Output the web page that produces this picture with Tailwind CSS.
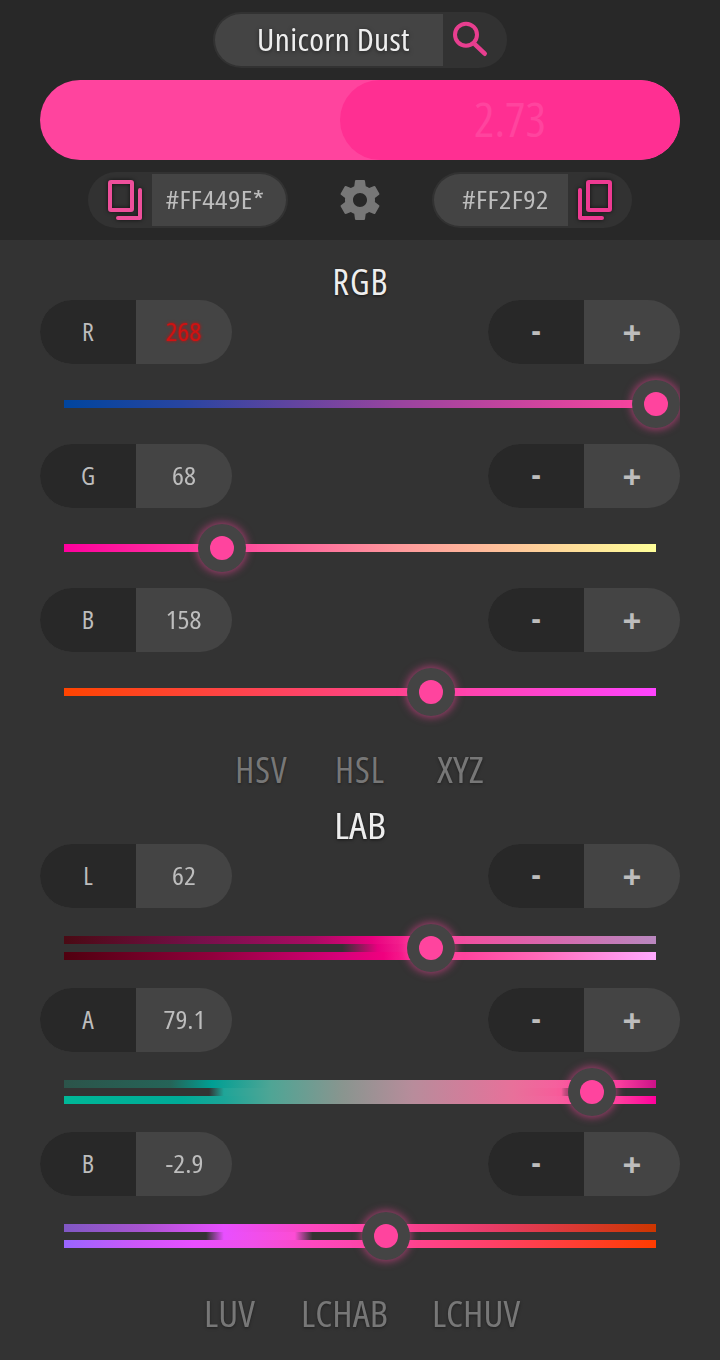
<!DOCTYPE html>
<html lang="en">
<head>
<meta charset="utf-8">
<title>Unicorn Dust</title>
<script src="https://cdn.jsdelivr.net/npm/@tailwindcss/browser@4"></script>
</head>
<body class="w-[720px] h-[1360px] overflow-hidden bg-[#333333] font-['Open_Sans','Noto_Sans',sans-serif] text-[#bdbdbd] [font-stretch:75%]">
<header class="h-[240px] bg-[#282828] flex flex-col items-center pt-3">
  <div class="h-14 w-[294px] rounded-full bg-[#323232] flex p-0.5">
    <div class="w-[228px] rounded-l-full bg-[#444444] flex items-center justify-center pl-2.5 pb-0.5 text-[30px] tracking-[0.3px] text-[#eeeeee] [text-shadow:0_1px_4px_#0008]"><span class="scale-x-[1.115]">Unicorn Dust</span></div>
    <svg class="w-12 h-12 mt-0.5 ml-1 shrink-0" viewBox="0 0 48 48" fill="none" stroke="#e83e8f" stroke-width="4"><circle cx="19" cy="18.7" r="11"/><path d="M28.2 28.7 37.7 37.7" stroke-width="4.6" stroke-linecap="round"/></svg>
  </div>
  <div class="mt-3 w-[640px] h-20 rounded-full bg-[#ff449e] flex justify-end overflow-hidden">
    <div class="w-[340px] rounded-full bg-[#ff2f92] flex items-center justify-center pb-0.5 text-[48px] text-[#ff449e]"><span>2.73</span></div>
  </div>
  <div class="mt-3 w-[544px] h-14 flex items-center justify-between">
    <div class="w-[200px] h-14 rounded-full bg-[#323232] flex p-0.5">
      <svg class="w-[62px] h-[52px] shrink-0 drop-shadow-[0_0_2px_#000a]" viewBox="90 174 62 52" fill="none" stroke="#ee4f9b" stroke-width="4" stroke-linejoin="round" stroke-linecap="round"><rect x="110" y="182" width="22" height="28" rx="1"/><path d="M140 190V218H118"/></svg>
      <div class="w-[134px] rounded-r-full bg-[#444444] flex items-center justify-center pr-[7px] pb-0.5 text-[26px] tracking-[0.4px]"><span class="scale-x-[1.12]">#FF449E*</span></div>
    </div>
    <svg class="w-12 h-12" viewBox="0 0 24 24" fill="#777777"><path d="M19.43 12.98c.04-.32.07-.64.07-.98s-.03-.66-.07-.98l2.11-1.65c.19-.15.24-.42.12-.64l-2-3.46c-.12-.22-.39-.3-.61-.22l-2.49 1c-.52-.4-1.08-.73-1.69-.98l-.38-2.65C14.46 2.18 14.25 2 14 2h-4c-.25 0-.46.18-.49.42l-.38 2.65c-.61.25-1.17.59-1.69.98l-2.49-1c-.23-.09-.49 0-.61.22l-2 3.46c-.13.22-.07.49.12.64l2.11 1.65c-.04.32-.07.65-.07.98s.03.66.07.98l-2.11 1.65c-.19.15-.24.42-.12.64l2 3.46c.12.22.39.3.61.22l2.49-1c.52.4 1.08.73 1.69.98l.38 2.65c.03.24.24.42.49.42h4c.25 0 .46-.18.49-.42l.38-2.65c.61-.25 1.17-.59 1.69-.98l2.49 1c.23.09.49 0 .61-.22l2-3.46c.12-.22.07-.49-.12-.64l-2.11-1.65zM12 15.5c-1.93 0-3.5-1.57-3.5-3.5s1.57-3.5 3.5-3.5 3.5 1.57 3.5 3.5-1.57 3.5-3.5 3.5z"/></svg>
    <div class="w-[200px] h-14 rounded-full bg-[#323232] flex p-0.5">
      <div class="w-[134px] rounded-l-full bg-[#444444] flex items-center justify-center pl-[9px] pb-0.5 text-[26px] tracking-[0.4px]"><span class="scale-x-[1.12]">#FF2F92</span></div>
      <svg class="w-[62px] h-[52px] shrink-0 drop-shadow-[0_0_2px_#000a]" viewBox="568 174 62 52" fill="none" stroke="#ee3a92" stroke-width="4" stroke-linejoin="round" stroke-linecap="round"><rect x="588" y="182" width="22" height="28" rx="1"/><path d="M580 190V218H602"/></svg>
    </div>
  </div>
</header>
<main class="px-10">
  <h2 class="h-[60px] pt-[18px] pl-px text-center text-[36px] tracking-[1px] leading-[48px] text-[#eeeeee] [text-shadow:0_1px_3px_#0009]">RGB</h2>
  <section id="rgb"></section>
  <nav class="h-16 flex justify-center gap-[44px] pt-[14px] text-center whitespace-nowrap text-[36px] leading-[48px] text-[#777777] [text-shadow:0_1px_3px_#0006]"><span class="w-[56px] tracking-[1px]">HSV</span><span class="w-[53px] tracking-[1px]">HSL</span><span class="w-[56px] pl-0.5 scale-x-[1.15]">XYZ</span></nav>
  <h2 class="h-12 pt-[6px] pl-px flex justify-center text-[36px] leading-[48px] text-[#eeeeee] [text-shadow:0_1px_3px_#0009]"><span class="scale-x-[1.12]">LAB</span></h2>
  <section id="lab"></section>
  <nav class="flex justify-center gap-[42px] pt-[14px] pl-0.5 text-center whitespace-nowrap text-[36px] leading-[48px] text-[#777777] [text-shadow:0_1px_3px_#0006]"><span class="w-[55px] scale-x-[1.07]">LUV</span><span class="w-[91px] scale-x-[1.07]">LCHAB</span><span class="w-[88px] scale-x-[1.07]">LCHUV</span></nav>
</main>
<script>
const grad = s => 'linear-gradient(90deg,' + s + ')';
const rgb = [
  ['R', '268', 656, ['#00459e,#2845a1 20%,#9a449f 57%,#ff449e']],
  ['G', '68', 222, ['#ff009e,#ff449e 27%,#ff9a9c 57%,#ffff99']],
  ['B', '158', 431, ['#ff4400,#ff449e 62%,#ff44ff']]
];
const lab = [
  ['L', '62', 431, [
    '#4a0a14,#76104a 23%,#a80b62 42%,#e8007f 52%,#ff449e 62%,#f050a0 68%,#b987bf',
    '#e8007f00 47%,#e8007f 53%,#ff449e 62%,#ff449e 65%,#ff449e00 66%',
    '#50000f,#90003c 25%,#d8007a 47%,#f0007f 54%,#ff449e 62%,#ff449e 68%,#ff6ab8 80%,#ffaaff']],
  ['A', '79.1', 592, [
    '#2c544a,#256458 18%,#009f94 25%,#4fa595 35%,#89958f 47%,#b88c9b 59%,#e8709a 76%,#ff55a0 88%,#f83c9e 94%,#cc1188',
    '#16a59800 24.5%,#1fa598 27%,#4fa595 35%,#89958f 47%,#b88c9b 59%,#e8709a 76%,#f85a9a 84%,#f85a9a00 86%',
    '#00b898,#00ab98 20%,#1ba598 27%,#4fa595 35%,#89958f 47%,#b88c9b 59%,#e8709a 76%,#ff55a0 88%,#ff3c9e 94%,#ff009c']],
  ['B', '-2.9', 386, [
    '#8058c4,#a854d0 13%,#e84fff 27%,#fd48c0 42%,#ff449e 54%,#e83c68 72%,#cc3600',
    '#e84fff00 24%,#e84fff 27%,#fc4dd4 39%,#fc4dd400 42%',
    '#9966ff,#cc58f8 12%,#e84fff 22%,#f050e8 32%,#fd48c0 42%,#ff449e 54%,#ff4068 72%,#ff3c00']]
];
const row = ([name, val, x, g]) => `
<div class="h-[144px] -mx-10 px-10 overflow-hidden">
  <div class="flex justify-between h-16 text-[26px]">
    <div class="w-48 rounded-full overflow-hidden grid grid-cols-2 bg-[#444444]">
      <div class="bg-[#282828] flex items-center justify-center pb-0.5">${name}</div>
      <div class="flex items-center justify-center pb-0.5 ${val === '268' ? 'text-[#d01212] [text-shadow:0_0_3px_#e00000]' : ''}"><span class="scale-x-[1.08]">${val}</span></div>
    </div>
    <div class="w-48 rounded-full overflow-hidden grid grid-cols-2 bg-[#444444] font-bold">
      <div class="bg-[#282828] flex items-center justify-center pb-1.5 text-[30px]">-</div>
      <div class="flex items-center justify-center pt-0.5 text-[33px] [font-stretch:100%]">+</div>
    </div>
  </div>
  <div class="h-20 px-6 overflow-x-clip relative">
    <div class="h-full flex flex-col justify-center">${g.map(s => `<div class="h-2" style="background:${grad(s)}"></div>`).join('')}</div>
    <div class="absolute top-4 size-12 rounded-full bg-[#444444] flex items-center justify-center shadow-[0_0_8px_1px_#ff449e99]" style="left:${x - 64}px"><i class="size-6 rounded-full bg-[#ff449e]"></i></div>
  </div>
</div>`;
document.getElementById('rgb').innerHTML = rgb.map(row).join('');
document.getElementById('lab').innerHTML = lab.map(row).join('');
</script>
</body>
</html>
